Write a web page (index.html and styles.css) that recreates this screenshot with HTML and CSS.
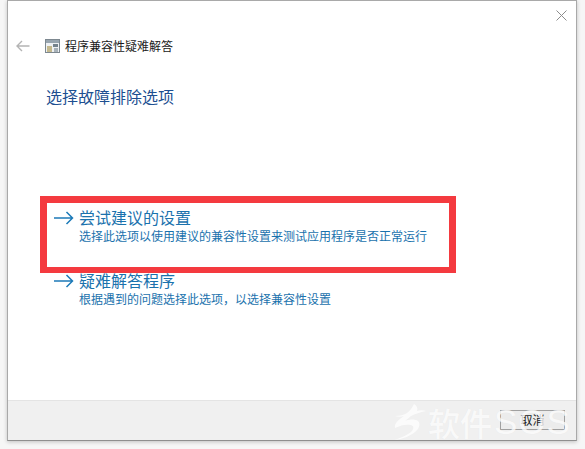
FILE: index.html
```html
<!DOCTYPE html>
<html lang="zh-CN">
<head>
<meta charset="utf-8">
<title>程序兼容性疑难解答</title>
<link rel="stylesheet" href="styles.css">
</head>
<body>
<div class="window">
  <div class="main">
    <div class="closebar">
      <svg class="close" width="11" height="11" viewBox="0 0 11 11"><path d="M.5.5l10 10M10.5.5l-10 10" stroke="#8c8c8c" stroke-width="1" fill="none"/></svg>
    </div>
    <div class="titlebar">
      <svg class="back" width="14" height="12" viewBox="0 0 14 12"><path d="M13.5 6H1.2M6 1L1 6l5 5" stroke="#b4b4b4" stroke-width="1.4" fill="none"/></svg>
      <svg class="appicon" width="15" height="14" viewBox="0 0 15 14">
        <rect x=".5" y=".5" width="14" height="13" fill="#eef1f4" stroke="#7d8890"/>
        <rect x="1" y="1" width="13" height="3" fill="#98a5af"/>
        <rect x="2" y="7" width="5" height="6" fill="#c4b98e"/>
        <path d="M8 5h5v3H8z" fill="#74828c"/>
        <path d="M9 9h4v4H9z" fill="#a8b2b9"/>
      </svg>
      <span class="apptitle">程序兼容性疑难解答</span>
    </div>
    <h1 class="heading">选择故障排除选项</h1>
    <div class="options">
      <div class="option">
        <svg class="arrow" width="20" height="14" viewBox="0 0 20 14"><path d="M0 7h18.5M12.5 1l6 6-6 6" stroke="#1c7ab8" stroke-width="1.5" fill="none"/></svg>
        <div class="option-text">
          <div class="option-title">尝试建议的设置</div>
          <div class="option-sub">选择此选项以使用建议的兼容性设置来测试应用程序是否正常运行</div>
        </div>
      </div>
      <div class="option">
        <svg class="arrow" width="20" height="14" viewBox="0 0 20 14"><path d="M0 7h18.5M12.5 1l6 6-6 6" stroke="#1c7ab8" stroke-width="1.5" fill="none"/></svg>
        <div class="option-text">
          <div class="option-title">疑难解答程序</div>
          <div class="option-sub">根据遇到的问题选择此选项，以选择兼容性设置</div>
        </div>
      </div>
    </div>
  </div>
  <div class="footer">
    <button class="cancel">取消</button>
  </div>
</div>
<div class="annotation"></div>
<div class="watermark">
  <svg class="wm-icon" width="34" height="38" viewBox="0 0 34 38"><path d="M21 1c3 2 4 4 3 7 3-1 6-1 9 0-6 1-11 3-15 5l-6 5c5-2 10-2 13 0 3 3 1 8-3 11-5 4-12 7-21 8 7-2 14-5 18-9 2-3 2-5-1-6-5-1-10 0-16 3-1-4 3-8 9-12-3 1-6 1-9 0 5 0 9-1 12-3 3-2 5-5 7-9z" fill="#fff" fill-opacity=".75"/></svg>
  <span class="wm-cjk">软件</span>
  <span class="wm-latin">SOS</span>
</div>
</body>
</html>
```
FILE: styles.css
```css
html, body {
  margin: 0;
  padding: 0;
  width: 585px;
  height: 449px;
  overflow: hidden;
  background: #f6f6f6;
  font-family: "Noto Sans CJK SC", "Noto Sans", sans-serif;
}
.window {
  margin-left: 7px;
  width: 570px;
  height: 441px;
  box-sizing: border-box;
  border: 1px solid #a9a9a9;
  border-bottom-color: #8f8f8f;
  background: #fff;
  display: flex;
  flex-direction: column;
  box-shadow: 0 1px 4px rgba(0, 0, 0, .22);
}
.main {
  flex: 1;
  min-height: 0;
  display: flex;
  flex-direction: column;
}
.closebar {
  height: 20px;
  display: flex;
  justify-content: flex-end;
  align-items: flex-end;
  padding-right: 9px;
}
.titlebar {
  margin-top: 16px;
  height: 18px;
  display: flex;
  align-items: center;
  padding-left: 8px;
}
.back { margin-right: 15px; }
.appicon { margin-right: 5px; }
.apptitle {
  font-size: 12px;
  line-height: 18px;
  color: #1a1a1a;
}
.heading {
  margin: 29px 0 0 38px;
  font-size: 16px;
  line-height: 24px;
  font-weight: 400;
  color: #1d4f91;
}
.options {
  margin-top: 98px;
  padding-left: 46px;
  display: flex;
  flex-direction: column;
  gap: 24px;
}
.option {
  display: flex;
  align-items: flex-start;
}
.arrow {
  margin-top: 5px;
  margin-right: 5px;
  flex: none;
}
.option-title {
  font-size: 16px;
  line-height: 22px;
  color: #1a72ad;
  white-space: nowrap;
}
.option-sub {
  margin-top: -1px;
  font-size: 12px;
  line-height: 18px;
  color: #1a72ad;
  white-space: nowrap;
}
.footer {
  height: 40px;
  flex: none;
  box-sizing: border-box;
  background: #f0f0f0;
  border-top: 1px solid #e4e4e4;
  display: flex;
  justify-content: flex-end;
  align-items: flex-start;
  padding: 9px 11px 0 0;
}
.cancel {
  width: 65px;
  height: 20px;
  padding: 0;
  box-sizing: border-box;
  border: 1px solid #a0a0a0;
  background: #ececec;
  font-family: inherit;
  font-size: 12px;
  line-height: 18px;
  color: #1a1a1a;
}
.annotation {
  position: absolute;
  left: 40px;
  top: 196px;
  width: 416px;
  height: 77px;
  box-sizing: border-box;
  border: 7px solid #f43a3f;
  border-bottom-width: 6px;
}
.watermark {
  position: absolute;
  left: 393px;
  top: 402px;
  display: flex;
  align-items: center;
  height: 40px;
  color: rgba(255, 255, 255, .8);
  white-space: nowrap;
  text-shadow: 0 0 1px rgba(0, 0, 0, .05);
}
.wm-icon {
  flex: none;
  margin-right: 1px;
}
.wm-cjk {
  font-size: 32px;
  line-height: 40px;
  font-weight: 500;
}
.wm-latin {
  margin-left: 2px;
  font-family: "Liberation Sans", sans-serif;
  font-size: 35px;
  line-height: 40px;
  letter-spacing: 1px;
}
```
